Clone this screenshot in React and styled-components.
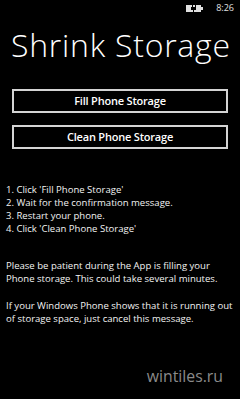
import React from "react";
import styled, { createGlobalStyle } from "styled-components";

const Global = createGlobalStyle`
  html, body { margin: 0; padding: 0; background: #000; }
  body { font-family: "Open Sans", "Noto Sans", sans-serif; color: #fff; }
`;

const Screen = styled.div`
  width: 240px;
  height: 399px;
  background: #000;
  display: flex;
  flex-direction: column;
  overflow: hidden;
`;

const StatusBar = styled.div`
  height: 16px;
  display: flex;
  align-items: center;
  justify-content: flex-end;
  gap: 13px;
  padding-right: 6px;
`;

const Time = styled.span`
  font-size: 9px;
  color: #e0e0e0;
  line-height: 1;
  margin-top: -1px;
`;

const Title = styled.h1`
  margin: 8.6px 0 0 11px;
  font-size: 32px;
  font-weight: 300;
  line-height: 40px;
  letter-spacing: 0.75px;
  white-space: nowrap;
`;

const Buttons = styled.div`
  display: flex;
  flex-direction: column;
  gap: 12px;
  margin: 24.4px 12px 0 12px;
`;

const Button = styled.button`
  height: 24px;
  box-sizing: border-box;
  border: 2px solid #d4d4d4;
  background: #000;
  color: #fff;
  font-family: inherit;
  font-size: 11px;
  font-weight: 600;
  letter-spacing: -0.2px;
  padding: 0;
  display: flex;
  align-items: center;
  justify-content: center;
`;

const Text = styled.div`
  margin: ${(p) => p.$top}px 0 0 6px;
  font-size: 9.55px;
  line-height: 13.2px;
  color: #f2f2f2;
  white-space: pre-line;
`;

const Watermark = styled.div`
  margin: auto 17px 13px auto;
  font-size: 15.8px;
  line-height: 20px;
  font-weight: 400;
  color: #8a8a8a;
`;

const Battery = () => (
  <svg width="17" height="7" viewBox="0 0 17 7">
    <rect x="0" y="0" width="15" height="7" fill="#e0e0e0" />
    <rect x="15" y="2" width="2" height="3" fill="#e0e0e0" />
    <rect x="6" y="0" width="1" height="2" fill="#000" />
    <rect x="9" y="0" width="1" height="2" fill="#000" />
    <rect x="5" y="2" width="5" height="3" fill="#000" />
    <rect x="7" y="5" width="1" height="2" fill="#000" />
  </svg>
);

export default function App() {
  return (
    <>
      <Global />
      <Screen>
        <StatusBar>
          <Battery />
          <Time>8:26</Time>
        </StatusBar>
        <Title>Shrink Storage</Title>
        <Buttons>
          <Button>Fill Phone Storage</Button>
          <Button>Clean Phone Storage</Button>
        </Buttons>
        <Text $top={33.7}>
          {"1. Click 'Fill Phone Storage'\n2. Wait for the confirmation message.\n3. Restart your phone.\n4. Click 'Clean Phone Storage'"}
        </Text>
        <Text $top={23.2}>
          {"Please be patient during the App is filling your\nPhone storage. This could take several minutes."}
        </Text>
        <Text $top={13.6}>
          {"If your Windows Phone shows that it is running out\nof storage space, just cancel this message."}
        </Text>
        <Watermark>wintiles.ru</Watermark>
      </Screen>
    </>
  );
}
